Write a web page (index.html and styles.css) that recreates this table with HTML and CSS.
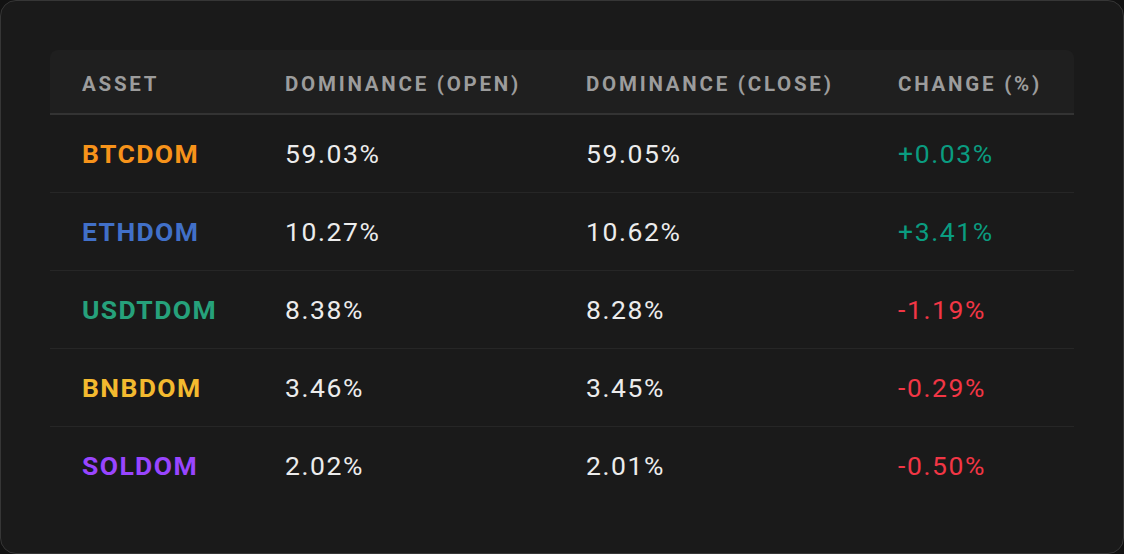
FILE: index.html
```html
<!DOCTYPE html>
<html lang="en">
<head>
<meta charset="utf-8">
<title>Dominance</title>
<link rel="stylesheet" href="styles.css">
</head>
<body>
<div class="card">
  <table class="dom-table">
    <colgroup>
      <col class="c1"><col class="c2"><col class="c3"><col class="c4">
    </colgroup>
    <thead>
      <tr>
        <th>Asset</th>
        <th>Dominance (Open)</th>
        <th>Dominance (Close)</th>
        <th>Change (%)</th>
      </tr>
    </thead>
    <tbody>
      <tr>
        <td class="asset btc">BTCDOM</td>
        <td>59.03%</td>
        <td>59.05%</td>
        <td class="up">+0.03%</td>
      </tr>
      <tr>
        <td class="asset eth">ETHDOM</td>
        <td>10.27%</td>
        <td>10.62%</td>
        <td class="up">+3.41%</td>
      </tr>
      <tr>
        <td class="asset usdt">USDTDOM</td>
        <td>8.38%</td>
        <td>8.28%</td>
        <td class="down">-1.19%</td>
      </tr>
      <tr>
        <td class="asset bnb">BNBDOM</td>
        <td>3.46%</td>
        <td>3.45%</td>
        <td class="down">-0.29%</td>
      </tr>
      <tr>
        <td class="asset sol">SOLDOM</td>
        <td>2.02%</td>
        <td>2.01%</td>
        <td class="down">-0.50%</td>
      </tr>
    </tbody>
  </table>
</div>
</body>
</html>
```

FILE: styles.css
```css
html, body {
  margin: 0;
  padding: 0;
  background: #121212;
}

body {
  font-family: Roboto, "Liberation Sans", sans-serif;
}

.card {
  box-sizing: border-box;
  width: 1124px;
  height: 554px;
  background: #1a1a1a;
  border: 1px solid #363636;
  border-radius: 16px;
  padding: 49px;
}

.dom-table {
  width: 1024px;
  border-collapse: separate;
  border-spacing: 0;
  table-layout: fixed;
}

.c1 { width: 203px; }
.c2 { width: 301px; }
.c3 { width: 312px; }
.c4 { width: 208px; }

.dom-table th {
  height: 59px;
  padding: 4px 0 0 32px;
  text-align: left;
  background: #1f1f1f;
  border-bottom: 2px solid #333333;
  color: #9c9c9c;
  font-size: 20.5px;
  font-weight: 700;
  letter-spacing: 2.75px;
  text-transform: uppercase;
  box-sizing: content-box;
}

.dom-table th:first-child { border-top-left-radius: 8px; }
.dom-table th:last-child { border-top-right-radius: 8px; }

.dom-table td {
  height: 77px;
  padding: 0 0 0 32px;
  border-bottom: 1px solid #262626;
  color: #ececec;
  font-size: 26.5px;
  font-weight: 400;
  letter-spacing: 1.6px;
  box-sizing: content-box;
}

.dom-table tbody tr:last-child td {
  border-bottom: none;
}

.dom-table td.asset {
  font-weight: 700;
  letter-spacing: 1.4px;
}

.btc { color: #f7931a !important; }
.eth { color: #4170c8 !important; }
.usdt { color: #26a17b !important; }
.bnb { color: #f3ba2f !important; }
.sol { color: #9945ff !important; }

.dom-table td.up { color: #0a9c80; }
.dom-table td.down { color: #f23645; }
```
